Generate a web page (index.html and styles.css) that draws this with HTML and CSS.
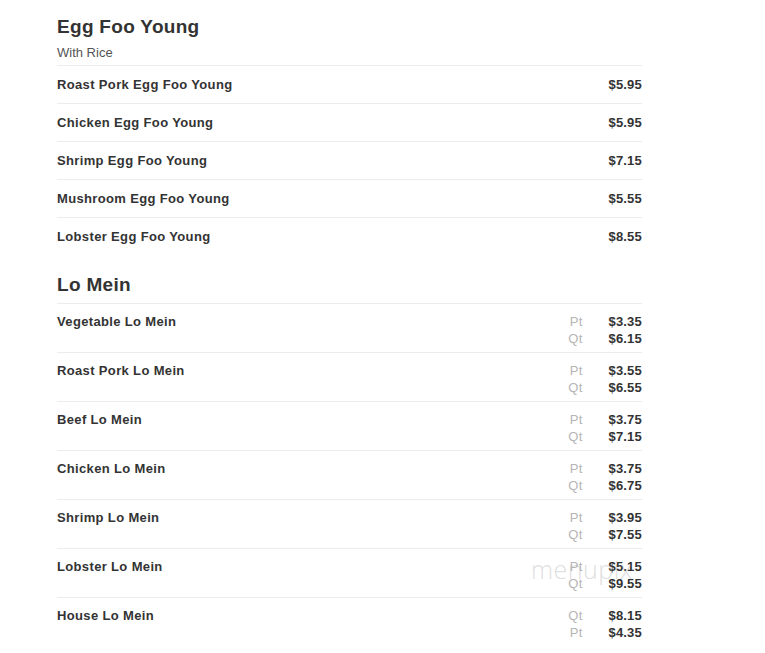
FILE: index.html
```html
<!DOCTYPE html>
<html>
<head>
<meta charset="utf-8">
<link rel="stylesheet" href="styles.css">
</head>
<body>
<div class="menu">
  <section class="section">
    <h2 class="title">Egg Foo Young</h2>
    <div class="subtitle">With Rice</div>
    <div class="item"><span class="name">Roast Pork Egg Foo Young</span><div class="prices"><div class="pline"><span class="price">$5.95</span></div></div></div>
    <div class="item"><span class="name">Chicken Egg Foo Young</span><div class="prices"><div class="pline"><span class="price">$5.95</span></div></div></div>
    <div class="item"><span class="name">Shrimp Egg Foo Young</span><div class="prices"><div class="pline"><span class="price">$7.15</span></div></div></div>
    <div class="item"><span class="name">Mushroom Egg Foo Young</span><div class="prices"><div class="pline"><span class="price">$5.55</span></div></div></div>
    <div class="item"><span class="name">Lobster Egg Foo Young</span><div class="prices"><div class="pline"><span class="price">$8.55</span></div></div></div>
  </section>
  <section class="section second">
    <h2 class="title">Lo Mein</h2>
    <div class="item multi"><span class="name">Vegetable Lo Mein</span><div class="prices"><div class="pline"><span class="size">Pt</span><span class="price">$3.35</span></div><div class="pline"><span class="size">Qt</span><span class="price">$6.15</span></div></div></div>
    <div class="item multi"><span class="name">Roast Pork Lo Mein</span><div class="prices"><div class="pline"><span class="size">Pt</span><span class="price">$3.55</span></div><div class="pline"><span class="size">Qt</span><span class="price">$6.55</span></div></div></div>
    <div class="item multi"><span class="name">Beef Lo Mein</span><div class="prices"><div class="pline"><span class="size">Pt</span><span class="price">$3.75</span></div><div class="pline"><span class="size">Qt</span><span class="price">$7.15</span></div></div></div>
    <div class="item multi"><span class="name">Chicken Lo Mein</span><div class="prices"><div class="pline"><span class="size">Pt</span><span class="price">$3.75</span></div><div class="pline"><span class="size">Qt</span><span class="price">$6.75</span></div></div></div>
    <div class="item multi"><span class="name">Shrimp Lo Mein</span><div class="prices"><div class="pline"><span class="size">Pt</span><span class="price">$3.95</span></div><div class="pline"><span class="size">Qt</span><span class="price">$7.55</span></div></div></div>
    <div class="item multi wm-host"><span class="name">Lobster Lo Mein</span><div class="prices"><div class="pline"><span class="size">Pt</span><span class="price">$5.15</span></div><div class="pline"><span class="size">Qt</span><span class="price">$9.55</span></div></div><span class="watermark">menupix</span></div>
    <div class="item multi"><span class="name">House Lo Mein</span><div class="prices"><div class="pline"><span class="size">Qt</span><span class="price">$8.15</span></div><div class="pline"><span class="size">Pt</span><span class="price">$4.35</span></div></div></div>
  </section>
</div>
</body>
</html>
```
FILE: styles.css
```css
html, body {
  margin: 0;
  padding: 0;
  background: #fff;
}
body {
  font-family: "Liberation Sans", Arial, sans-serif;
  color: #333;
}
.menu {
  width: 585px;
  margin-left: 57px;
  padding-top: 16px;
}
.title {
  margin: 0;
  font-size: 19px;
  line-height: 22px;
  font-weight: bold;
  letter-spacing: 0.3px;
  color: #333;
}
.second .title {
  margin-top: 19px;
  margin-bottom: 7px;
}
.subtitle {
  margin-top: 6px;
  font-size: 13px;
  line-height: 17px;
  color: #555;
  padding-bottom: 4px;
}
.item {
  border-top: 1px solid #ececec;
  display: flex;
  justify-content: space-between;
  align-items: flex-start;
  padding: 10px 0;
}
.item.multi {
  padding-top: 9px;
  padding-bottom: 5px;
}
.name {
  font-size: 13px;
  line-height: 17px;
  font-weight: bold;
  letter-spacing: 0.35px;
  color: #333;
}
.prices {
  display: flex;
  flex-direction: column;
}
.pline {
  display: flex;
  justify-content: flex-end;
  gap: 26px;
  font-size: 13px;
  line-height: 17px;
}
.size {
  color: #b5b5b5;
  letter-spacing: 0.2px;
}
.price {
  font-weight: bold;
  color: #333;
  letter-spacing: 0.2px;
}
.wm-host {
  position: relative;
}
.watermark {
  position: absolute;
  left: 474px;
  top: 7px;
  font-family: "Open Sans", sans-serif;
  font-weight: 300;
  font-size: 25px;
  line-height: 26px;
  letter-spacing: 0.5px;
  color: rgba(170, 170, 170, 0.4);
  pointer-events: none;
}
```
